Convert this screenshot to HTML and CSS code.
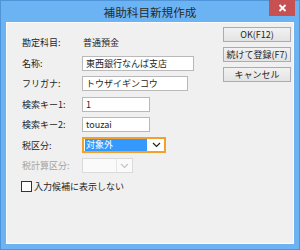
FILE: index.html
```html
<!DOCTYPE html>
<html lang="ja">
<head>
  <meta charset="UTF-8" />
  <title>補助科目新規作成</title>
  <link rel="stylesheet" href="styles.css">
</head>
<body>
  <div class="window">
    <div class="titlebar">
      <span class="title">補助科目新規作成</span>
      <div class="close">
        <svg width="9" height="8" viewBox="0 0 9 8"><path d="M1.5 1 L7.5 7 M7.5 1 L1.5 7" stroke="#fff" stroke-width="1.8"/></svg>
      </div>
    </div>

    <div class="client">
      <div class="form">
        <div class="row">
          <span class="label">勘定科目:</span>
          <span class="value">普通預金</span>
        </div>
        <div class="row">
          <span class="label">名称:</span>
          <div class="input w-name">東西銀行なんば支店</div>
        </div>
        <div class="row">
          <span class="label">フリガナ:</span>
          <div class="input w-kana">トウザイギンコウ</div>
        </div>
        <div class="row">
          <span class="label">検索キー1:</span>
          <div class="input w-key">1</div>
        </div>
        <div class="row">
          <span class="label">検索キー2:</span>
          <div class="input w-key">touzai</div>
        </div>
        <div class="row">
          <span class="label">税区分:</span>
          <div class="select focused">
            <span class="selected">対象外</span>
            <svg class="chev" width="9" height="6" viewBox="0 0 9 6"><path d="M1 1 L4.5 4.5 L8 1" fill="none" stroke="#222" stroke-width="1.2"/></svg>
          </div>
        </div>
        <div class="row">
          <span class="label disabled">税計算区分:</span>
          <div class="select off">
            <span class="blank"></span>
            <svg class="chev" width="9" height="6" viewBox="0 0 9 6"><path d="M1 1 L4.5 4.5 L8 1" fill="none" stroke="#c4c4c4" stroke-width="1.2"/></svg>
          </div>
        </div>
        <label class="check-row">
          <span class="box"></span>
          <span>入力候補に表示しない</span>
        </label>
      </div>

      <div class="buttons">
        <button class="btn">OK(F12)</button>
        <button class="btn">続けて登録(F7)</button>
        <button class="btn">キャンセル</button>
      </div>
    </div>
  </div>
</body>
</html>
```

FILE: styles.css
```css
html, body {
  margin: 0;
  padding: 0;
}
body {
  width: 300px;
  height: 250px;
  overflow: hidden;
  font-family: "Noto Sans CJK JP", "Noto Sans", sans-serif;
  font-size: 9px;
  color: #1e1e1e;
}
.window {
  position: relative;
  box-sizing: border-box;
  width: 300px;
  height: 250px;
  background: #6cb3f4;
  border: 1px solid #4d94d8;
  display: flex;
  flex-direction: column;
}
.titlebar {
  height: 21px;
  display: flex;
  align-items: center;
  justify-content: center;
}
.title {
  font-size: 11.6px;
  color: #2a2a2a;
  margin-top: 1px;
}
.close {
  position: absolute;
  top: -1px;
  right: 4px;
  width: 26px;
  height: 16px;
  background: #c75050;
  display: flex;
  align-items: center;
  justify-content: center;
}
.client {
  flex: 1;
  margin: 0 5px 5px 5px;
  background: #f0f0f0;
  border: 1px solid #fbfbfb;
  display: flex;
  justify-content: space-between;
}
.form {
  padding: 12px 0 0 15px;
  display: grid;
  grid-auto-rows: 15px;
  row-gap: 5.5px;
  align-content: start;
}
.row {
  display: flex;
  align-items: center;
}
.label {
  width: 60px;
}
.label.disabled {
  color: #a3a3a3;
}
.value {
  padding-left: 1px;
}
.input {
  box-sizing: border-box;
  height: 15px;
  background: #fff;
  border: 1px solid #b9b9b9;
  padding: 0 3px;
  line-height: 13px;
  white-space: nowrap;
}
.w-name { width: 112px; }
.w-kana { width: 106px; }
.w-key { width: 68px; }
.select {
  box-sizing: border-box;
  display: flex;
  align-items: center;
  background: #fff;
}
.select.focused {
  width: 84px;
  height: 16px;
  border: 2px solid #f0a12e;
}
.selected {
  flex: 1;
  height: 12px;
  margin-left: 1px;
  background: #3399ff;
  color: #fff;
  line-height: 12px;
  padding-left: 1px;
}
.chev {
  margin: 0 3px 0 5px;
}
.select.off {
  width: 51px;
  height: 15px;
  border: 1px solid #dadada;
  background: #fafafa;
}
.blank {
  flex: 1;
  height: 13px;
  border-right: 1px solid #e6e6e6;
}
.select.off .chev {
  margin: 0 3px;
}
.check-row {
  display: flex;
  align-items: center;
  gap: 2px;
  margin-left: -1px;
  margin-top: 1px;
}
.box {
  box-sizing: border-box;
  width: 11px;
  height: 11px;
  background: #fff;
  border: 1px solid #333;
}
.buttons {
  padding: 4px 2px 0 0;
  display: flex;
  flex-direction: column;
  gap: 5px;
}
.btn {
  box-sizing: border-box;
  width: 68px;
  height: 15px;
  padding: 0;
  font-family: inherit;
  font-size: 9px;
  color: #1e1e1e;
  background: linear-gradient(#f2f2f2, #e3e3e3);
  border: 1px solid #acacac;
  line-height: 13px;
}
```
